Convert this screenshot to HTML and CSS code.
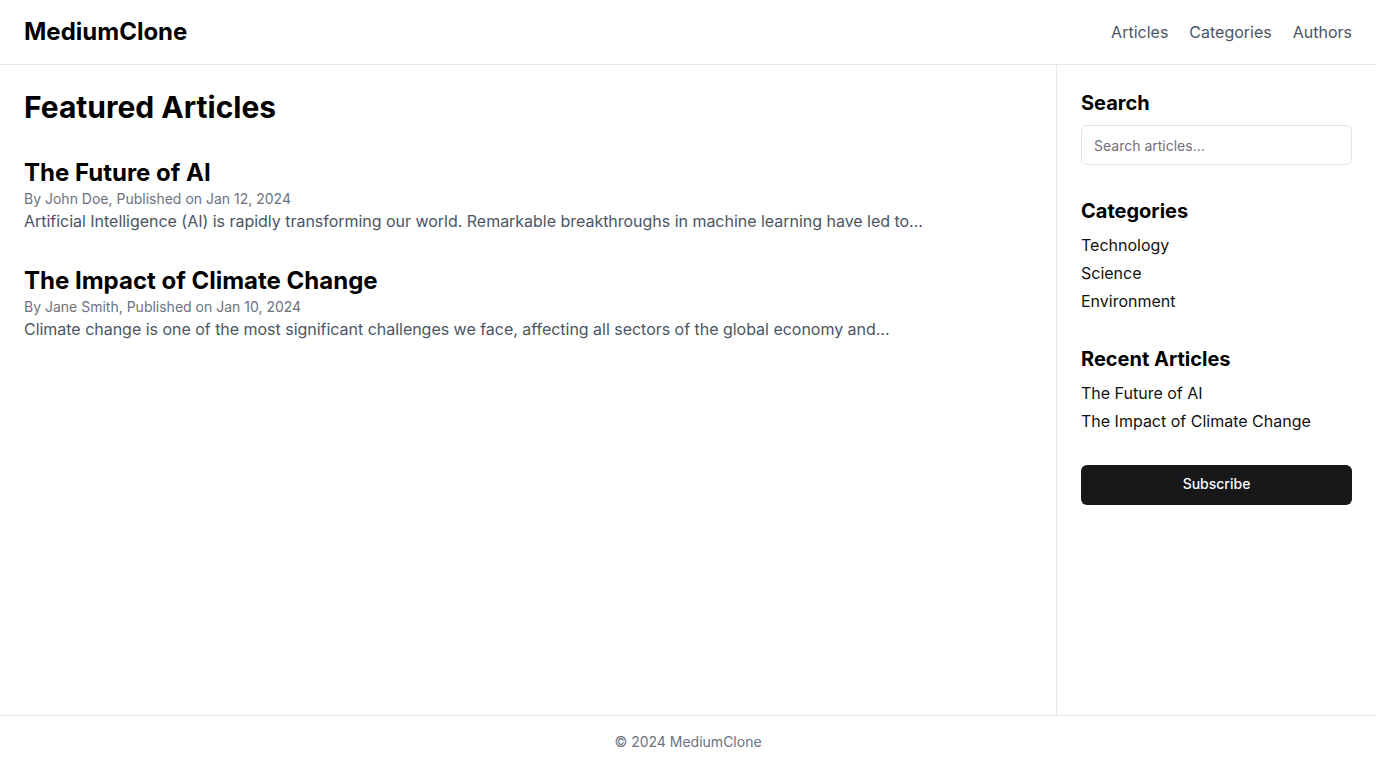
FILE: index.html
```html
<!DOCTYPE html>
<html lang="en">
<head>
<meta charset="utf-8">
<title>MediumClone</title>
<link rel="stylesheet" href="styles.css">
</head>
<body>
<div class="page">
  <header class="header">
    <div class="logo">MediumClone</div>
    <nav class="nav">
      <a href="#">Articles</a>
      <a href="#">Categories</a>
      <a href="#">Authors</a>
    </nav>
  </header>
  <div class="body">
    <main class="main">
      <h1 class="page-title">Featured Articles</h1>
      <div class="articles">
        <article class="article">
          <h2 class="article-title">The Future of AI</h2>
          <p class="meta">By John Doe, Published on Jan 12, 2024</p>
          <p class="excerpt">Artificial Intelligence (AI) is rapidly transforming our world. Remarkable breakthroughs in machine learning have led to...</p>
        </article>
        <article class="article">
          <h2 class="article-title">The Impact of Climate Change</h2>
          <p class="meta">By Jane Smith, Published on Jan 10, 2024</p>
          <p class="excerpt">Climate change is one of the most significant challenges we face, affecting all sectors of the global economy and...</p>
        </article>
      </div>
    </main>
    <aside class="sidebar">
      <section class="block">
        <h3 class="block-title">Search</h3>
        <input class="search" type="text" placeholder="Search articles...">
      </section>
      <section class="block">
        <h3 class="block-title">Categories</h3>
        <ul class="list">
          <li><a href="#">Technology</a></li>
          <li><a href="#">Science</a></li>
          <li><a href="#">Environment</a></li>
        </ul>
      </section>
      <section class="block">
        <h3 class="block-title">Recent Articles</h3>
        <ul class="list">
          <li><a href="#">The Future of AI</a></li>
          <li><a href="#">The Impact of Climate Change</a></li>
        </ul>
      </section>
      <button class="subscribe">Subscribe</button>
    </aside>
  </div>
  <footer class="footer">© 2024 MediumClone</footer>
</div>
</body>
</html>
```
FILE: styles.css
```css
* { box-sizing: border-box; }
html, body { margin: 0; padding: 0; }
body {
  font-family: Inter, "Noto Sans", sans-serif;
  color: #09090b;
  background: #fff;
}
a { color: inherit; text-decoration: none; }
.page {
  display: flex;
  flex-direction: column;
  min-height: 100vh;
}
.header {
  height: 65px;
  border-bottom: 1px solid #e5e7eb;
  display: flex;
  align-items: center;
  justify-content: space-between;
  padding: 0 24px;
}
.logo {
  font-size: 24px;
  line-height: 32px;
  font-weight: 700;
  color: #000;
}
.nav {
  display: flex;
  gap: 21px;
  font-size: 16px;
  line-height: 24px;
  color: #4b5563;
}
.body {
  flex: 1;
  display: flex;
}
.main {
  flex: 1;
  padding: 24px;
}
.page-title {
  margin: 0 0 32px;
  font-size: 30px;
  line-height: 36px;
  font-weight: 700;
  color: #000;
}
.articles {
  display: flex;
  flex-direction: column;
  gap: 32px;
}
.article-title {
  margin: 0;
  font-size: 24px;
  line-height: 32px;
  font-weight: 700;
  color: #000;
}
.meta {
  margin: 0;
  font-size: 14px;
  line-height: 20px;
  color: #6b7280;
}
.excerpt {
  margin: 0;
  font-size: 16px;
  line-height: 24px;
  color: #4b5563;
  letter-spacing: -0.0015em;
}
.sidebar {
  width: 320px;
  border-left: 1px solid #e5e7eb;
  padding: 24px;
  display: flex;
  flex-direction: column;
  gap: 32px;
}
.block-title {
  margin: 0 0 8px;
  font-size: 20px;
  line-height: 28px;
  font-weight: 700;
  color: #000;
}
.search {
  display: block;
  width: 100%;
  height: 40px;
  border: 1px solid #e4e4e7;
  border-radius: 6px;
  padding: 0 12px;
  font-family: inherit;
  font-size: 14px;
  color: #09090b;
  outline: none;
}
.search::placeholder { color: #71717a; }
.list {
  list-style: none;
  margin: 0;
  padding: 0;
  display: flex;
  flex-direction: column;
  gap: 4px;
  font-size: 16px;
  line-height: 24px;
  color: #111;
}
.subscribe {
  height: 40px;
  width: 100%;
  border: none;
  border-radius: 6px;
  background: #18181b;
  color: #fafafa;
  font-family: inherit;
  font-size: 14px;
  font-weight: 500;
  line-height: 20px;
  padding: 0 0 2px;
}
.footer {
  border-top: 1px solid #e5e7eb;
  padding: 16px;
  text-align: center;
  font-size: 14px;
  line-height: 20px;
  color: #6b7280;
}
```
